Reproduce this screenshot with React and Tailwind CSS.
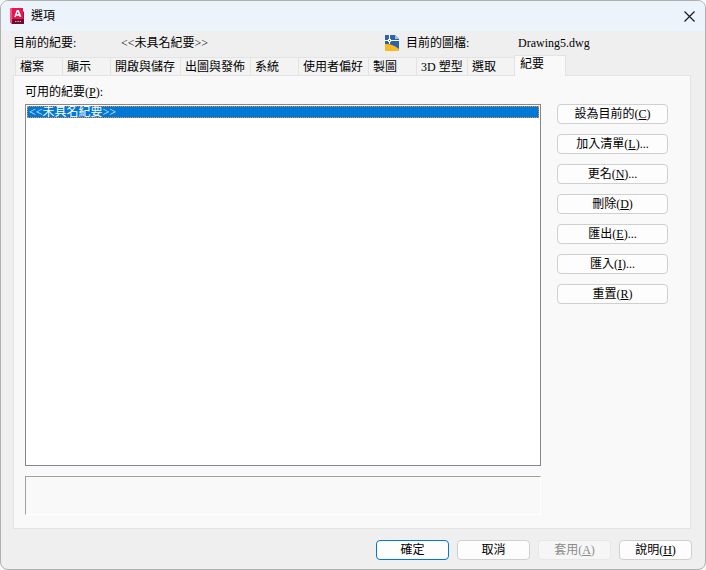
import React from "react";

const tabs = [
  { name: "檔案", width: "w-[47px]" },
  { name: "顯示", width: "w-12" },
  { name: "開啟與儲存", width: "w-[70px]" },
  { name: "出圖與發佈", width: "w-[70px]" },
  { name: "系統", width: "w-12" },
  { name: "使用者偏好", width: "w-[70px]" },
  { name: "製圖", width: "w-12" },
  { name: "3D 塑型", width: "w-[51px]" },
  { name: "選取", width: "w-[47px]" },
];

const actions = [
  { label: "設為目前的", mnemonic: "C" },
  { label: "加入清單", mnemonic: "L", more: true },
  { label: "更名", mnemonic: "N", more: true },
  { label: "刪除", mnemonic: "D" },
  { label: "匯出", mnemonic: "E", more: true },
  { label: "匯入", mnemonic: "I", more: true },
  { label: "重置", mnemonic: "R" },
];

function Caption({ label, mnemonic, more }) {
  return (
    <span>
      {label}
      {mnemonic && (
        <>
          (<u>{mnemonic}</u>)
        </>
      )}
      {more && "..."}
    </span>
  );
}

function PushButton({ tone = "border-[#d0d0d0] bg-[#fdfdfd] text-black", size, disabled, ...caption }) {
  return (
    <button
      type="button"
      disabled={disabled}
      className={`flex h-5 shrink-0 items-center justify-center whitespace-nowrap rounded border pb-px leading-4 ${tone} ${size}`}
    >
      <Caption {...caption} />
    </button>
  );
}

function AppLogo() {
  return (
    <svg className="h-4 w-4" viewBox="0 0 16 16" aria-hidden="true">
      <path d="M1 0h13v3l1 1v12H3l-2-2z" fill="#b00f40" />
      <path d="M3 0h11v11H3z" fill="#e8144f" />
      <path d="M1 0h2v16l-2-2z" fill="#f2587f" />
      <path d="M3 11h12v5H3z" fill="#6e0b2c" />
      <path d="M6 9L8.300 2.800h1L11.600 9M7 7h3.600" fill="none" stroke="#fff" strokeWidth="1.600" />
      <path d="M6 13.500h1.500M8.300 13.500h1.500M10.500 13.500h1.500" stroke="#dba5b8" />
    </svg>
  );
}

function DrawingIcon() {
  return (
    <svg className="h-4 w-[14px]" viewBox="0 0 14 16" aria-hidden="true">
      <path d="M0 0h10l4 4v12H0z" fill="#2c62a8" />
      <path d="M10 0l4 4h-4z" fill="#a9c0dc" />
      <path d="M0 9c5 0 9 1 14 5v2H0z" fill="#fbb822" />
      <path d="M0 5.500h14M4.500 0v9" stroke="#fff" strokeWidth="1.100" />
      <path d="M3 4h3v3H3z" fill="#fff" />
      <path d="M4 5h1v1H4z" fill="#2c62a8" />
    </svg>
  );
}

export default function App() {
  return (
    <div className="min-h-screen bg-[#f8f8f8] font-['Liberation_Serif','Noto_Sans_CJK_TC',serif] text-xs leading-4 text-black">
      <main className="flex min-h-screen flex-col overflow-hidden rounded-lg border border-[#b0b0b0] bg-[#efefef]">
        <header className="flex h-[30px] items-center bg-[#edf3fa] pl-2 pr-[10px]">
          <AppLogo />
          <h1 className="ml-[6px] flex-1">選項</h1>
          <button type="button" aria-label="關閉" className="flex h-4 w-3 items-center justify-center">
            <svg className="h-[11px] w-[11px] shrink-0" viewBox="0 0 11 11" aria-hidden="true">
              <path d="M.5.500l10 10M10.500.500l-10 10" stroke="#1a1a1a" strokeWidth="1.200" />
            </svg>
          </button>
        </header>

        <section className="flex h-6 items-center pl-3">
          <span className="w-[108px]">目前的紀要:</span>
          <span className="w-[264px]">&lt;&lt;未具名紀要&gt;&gt;</span>
          <DrawingIcon />
          <span className="ml-[7px] w-28">目前的圖檔:</span>
          <span>Drawing5.dwg</span>
        </section>

        <div role="tablist" className="flex h-5 items-end pl-[14px]">
          {tabs.map((tab) => (
            <button
              key={tab.name}
              type="button"
              role="tab"
              aria-selected="false"
              className={`h-[18px] shrink-0 whitespace-nowrap border-l border-t border-[#e3e3e3] bg-[#f3f3f3] pl-1 text-left leading-4 ${tab.width}`}
            >
              {tab.name}
            </button>
          ))}
          <button
            type="button"
            role="tab"
            aria-selected="true"
            className="z-10 -mb-px h-[21px] w-[52px] border border-b-0 border-[#e3e3e3] bg-[#f9f9f9] pb-1 pl-[5px] text-left leading-4"
          >
            紀要
          </button>
        </div>

        <section
          role="tabpanel"
          className="ml-3 mr-[14px] flex flex-1 gap-4 border border-[#e3e3e3] bg-[#f9f9f9] pb-[13px] pl-[11px] pr-[22px] pt-2"
        >
          <div className="flex min-w-0 flex-1 flex-col">
            <label htmlFor="profiles">
              <Caption label="可用的紀要" mnemonic="P" />:
            </label>
            <select
              id="profiles"
              size={2}
              defaultValue="unnamed"
              className="mt-1 min-h-[362px] flex-1 appearance-none overflow-hidden border border-[#828790] bg-white p-px outline-none"
            >
              <option
                value="unnamed"
                className="flex h-3 min-h-0 items-center border border-dotted border-[#ff8728] bg-[linear-gradient(#0078d7,#0078d7)] p-0 pb-[2px] pl-px text-xs text-white! checked:text-white!"
              >
                &lt;&lt;未具名紀要&gt;&gt;
              </option>
            </select>
            <output className="mt-[10px] block h-[39px] border border-b-white border-l-[#a0a0a0] border-r-white border-t-[#a0a0a0]" />
          </div>
          <div className="mt-5 flex w-[111px] shrink-0 flex-col gap-[10px]">
            {actions.map((action) => (
              <PushButton key={action.mnemonic} {...action} />
            ))}
          </div>
        </section>

        <footer className="flex justify-end gap-2 pb-[9px] pr-[13px] pt-[11px]">
          <PushButton label="確定" size="w-[73px]" tone="border-[#0078d4] bg-[#fdfdfd] text-black" />
          <PushButton label="取消" size="w-[73px]" />
          <PushButton
            label="套用"
            mnemonic="A"
            size="w-[73px]"
            disabled
            tone="border-[#e8e8e8] bg-[#f6f6f6] text-[#8c8c8c]"
          />
          <PushButton label="說明" mnemonic="H" size="w-[73px]" />
        </footer>
      </main>
    </div>
  );
}
